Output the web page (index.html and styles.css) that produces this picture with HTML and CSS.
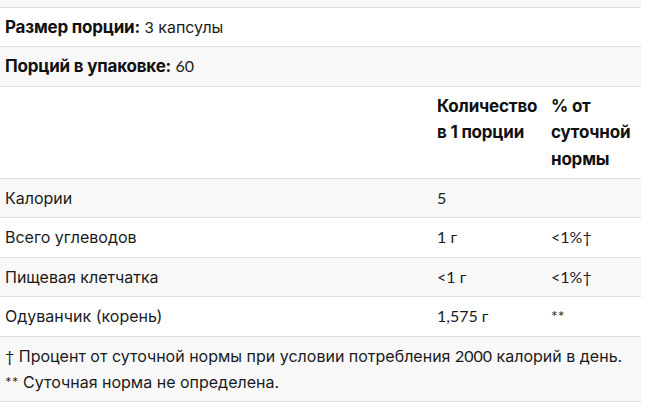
FILE: index.html
```html
<!DOCTYPE html>
<html lang="ru">
<head>
<meta charset="utf-8">
<link rel="stylesheet" href="styles.css">
</head>
<body>
<div class="facts">
  <div class="prev-row"></div>
  <table class="facts-table">
    <colgroup>
      <col class="c-name">
      <col class="c-amount">
      <col class="c-dv">
    </colgroup>
    <tbody>
      <tr class="row-white">
        <td colspan="3"><strong>Размер порции:</strong> <span class="num">3</span> капсулы</td>
      </tr>
      <tr class="row-gray">
        <td colspan="3"><strong>Порций в упаковке:</strong> <span class="num">60</span></td>
      </tr>
      <tr class="row-white head">
        <td></td>
        <th>Количество в 1 порции</th>
        <th>% от суточной нормы</th>
      </tr>
      <tr class="row-gray">
        <td>Калории</td>
        <td class="val">5</td>
        <td class="val"></td>
      </tr>
      <tr class="row-white">
        <td>Всего углеводов</td>
        <td class="val">1 г</td>
        <td class="val">&lt;1%†</td>
      </tr>
      <tr class="row-gray">
        <td>Пищевая клетчатка</td>
        <td class="val">&lt;1 г</td>
        <td class="val">&lt;1%†</td>
      </tr>
      <tr class="row-white">
        <td>Одуванчик (корень)</td>
        <td class="val">1,575 г</td>
        <td class="val">**</td>
      </tr>
      <tr class="row-gray">
        <td colspan="3" class="notes"><span class="num">†</span> Процент от суточной нормы при условии потребления <span class="num">2000</span> калорий в день.<br><span class="num">**</span> Суточная норма не определена.</td>
      </tr>
    </tbody>
  </table>
</div>
</body>
</html>
```

FILE: styles.css
```css
html, body {
  margin: 0;
  padding: 0;
  background: #ffffff;
}

body {
  font-family: Inter, "Noto Sans", sans-serif;
  font-size: 16px;
  color: #1b1b1b;
}

.facts {
  width: 641px;
}

.prev-row {
  height: 7px;
  background: #f8f8f8;
  border-bottom: 1px solid #dedede;
}

.facts-table {
  width: 641px;
  border-collapse: collapse;
  table-layout: fixed;
}

.c-name { width: 432px; }
.c-amount { width: 114px; }
.c-dv { width: 95px; }

.facts-table td,
.facts-table th {
  padding: 6px 5px;
  line-height: 26.4px;
  text-align: left;
  vertical-align: top;
  border-bottom: 1px solid #dedede;
}

.facts-table th,
.facts-table strong {
  font-size: 17px;
  font-weight: 700;
  letter-spacing: -0.2px;
  color: #111111;
}

.row-white { background: #ffffff; }
.row-gray { background: #f8f8f8; }

.val,
.num {
  font-family: Lato, Inter, sans-serif;
}
```
